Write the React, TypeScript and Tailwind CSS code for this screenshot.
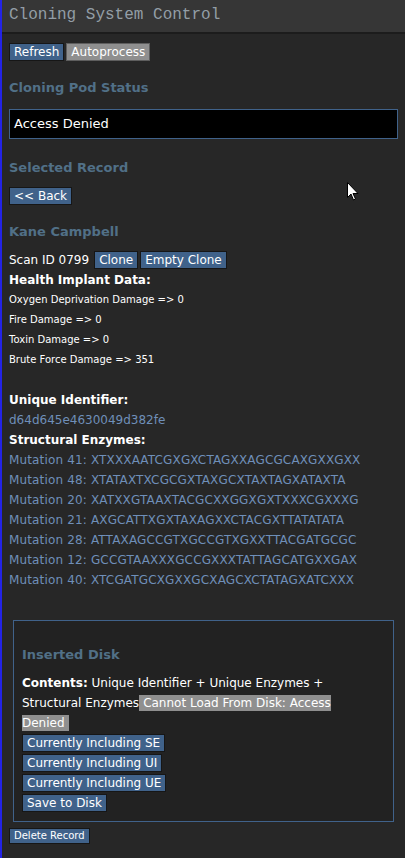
import React from "react";

function Btn({ children, off = false }: { children: React.ReactNode; off?: boolean }) {
  return (
    <span
      className={
        off
          ? "inline-block h-[18px] border border-[#5e5e5e] bg-[#8f8f8f] px-[4px] text-[12px] leading-[16px] text-white"
          : "inline-block h-[18px] border border-[#161616] bg-[#40628a] px-[4px] text-[12px] leading-[16px] text-white"
      }
    >
      {children}
    </span>
  );
}

const mutations = [
  ["41", "XTXXXAATCGXGXCTAGXXAGCGCAXGXXGXX"],
  ["48", "XTATAXTXCGCGXTAXGCXTAXTAGXATAXTA"],
  ["20", "XATXXGTAAXTACGCXXGGXGXTXXXCGXXXG"],
  ["21", "AXGCATTXGXTAXAGXXCTACGXTTATATATA"],
  ["28", "ATTAXAGCCGTXGCCGTXGXXTTACGATGCGC"],
  ["12", "GCCGTAAXXXGCCGXXXTATTAGCATGXXGAX"],
  ["40", "XTCGATGCXGXXGCXAGCXCTATAGXATCXXX"],
];

const health = [
  ["Oxygen Deprivation Damage", "0"],
  ["Fire Damage", "0"],
  ["Toxin Damage", "0"],
  ["Brute Force Damage", "351"],
];

export default function App() {
  return (
    <div className="relative min-h-[858px] border-l-2 border-[#2323e6] bg-[#272727] font-['Verdana','DejaVu_Sans',sans-serif] text-[12px] text-white">
      <div className="flex h-[34px] items-center border-b-2 border-[#1c1c1c] bg-[#363636] pl-[7px] pb-[2px] font-['Liberation_Mono',monospace] text-[16px] text-[#939ea6]">
        Cloning System Control
      </div>

      <div className="px-[7px]">
        <div className="mt-[9px] flex h-[18px] gap-[2px]">
          <Btn>Refresh</Btn>
          <Btn off>Autoprocess</Btn>
        </div>

        <h3 className="mt-[17px] text-[13px] font-bold leading-[20px] text-[#517087]">Cloning Pod Status</h3>
        <div className="mt-[11px] flex h-[30px] items-center border border-[#40628a] bg-black px-[4px] text-[13px]">
          Access Denied
        </div>

        <h3 className="mt-[19px] text-[13px] font-bold leading-[20px] text-[#517087]">Selected Record</h3>
        <div className="mt-[9px] flex h-[18px]">
          <Btn>&lt;&lt; Back</Btn>
        </div>

        <h4 className="mt-[17px] text-[13px] font-bold leading-[20px] text-[#517087]">Kane Campbell</h4>
        <div className="mt-[8px] flex h-[20px] items-center gap-[2px]">
          <span className="mr-[3px]">Scan ID 0799</span>
          <Btn>Clone</Btn>
          <Btn>Empty Clone</Btn>
        </div>
        <div className="font-bold leading-[20px]">Health Implant Data:</div>
        {health.map(([k, v]) => (
          <div key={k} className="text-[10px] leading-[20px]">
            {k} =&gt; {v}
          </div>
        ))}
        <div className="h-[20px]" />
        <div className="font-bold leading-[20px]">Unique Identifier:</div>
        <div className="leading-[20px] text-[#6f8fb9]">d64d645e4630049d382fe</div>
        <div className="font-bold leading-[20px]">Structural Enzymes:</div>
        {mutations.map(([n, s]) => (
          <div key={n} className="leading-[20px] tracking-[0.15px] text-[#6f8fb9]">
            Mutation {n}: {s}
          </div>
        ))}

        <div className="mx-[4px] mt-[30px] h-[202px] border border-[#40628a] bg-[#222222] pl-[8px] pr-[26px] pt-[24px]">
          <h3 className="text-[13px] font-bold leading-[20px] text-[#517087]">Inserted Disk</h3>
          <div className="mt-[8px] leading-[20px]">
            <b>Contents:</b> Unique Identifier + Unique Enzymes + Structural Enzymes
            <span className="bg-[#8f8f8f] px-[4px] py-[1px]">Cannot Load From Disk: Access Denied</span>
          </div>
          <div className="flex flex-col items-start gap-[2px] pt-[1px]">
            <Btn>Currently Including SE</Btn>
            <Btn>Currently Including UI</Btn>
            <Btn>Currently Including UE</Btn>
            <Btn>Save to Disk</Btn>
          </div>
        </div>

        <div className="mt-[6px] flex">
          <span className="inline-block h-[16px] border border-[#161616] bg-[#40628a] px-[4px] text-[10px] leading-[14px]">
            Delete Record
          </span>
        </div>
      </div>

      <svg className="absolute left-[345px] top-[182px]" width="12" height="19" viewBox="0 0 12 19">
        <path d="M0.5 0.5 V15.5 L4 12 L6.5 18 L8.5 17 L6 11.5 H11 Z" fill="white" stroke="black" strokeWidth="1" />
      </svg>
    </div>
  );
}
